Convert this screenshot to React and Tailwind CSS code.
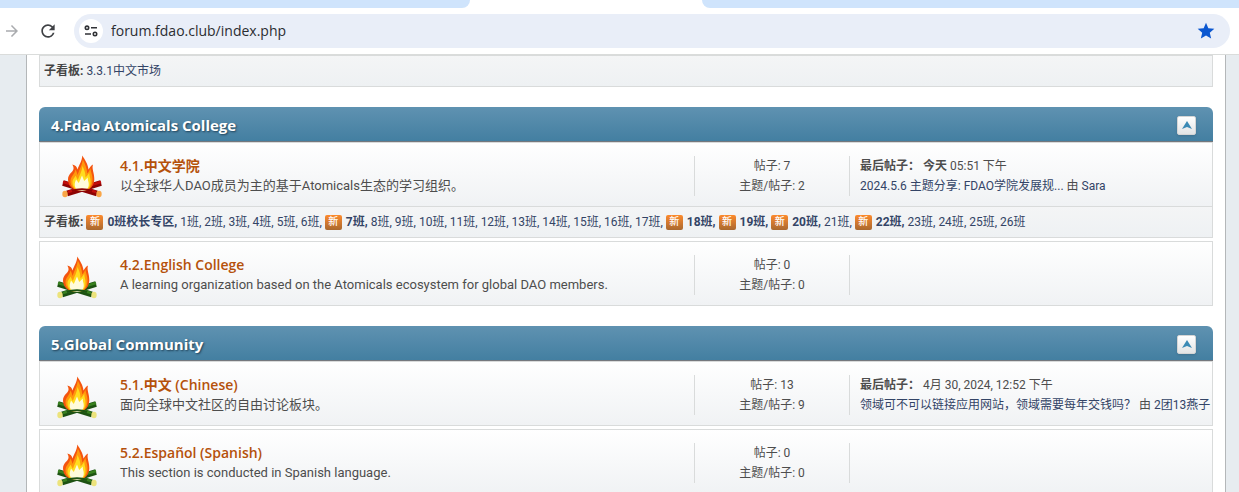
import React, { useState } from 'react'
import { MdArrowForward, MdRefresh, MdStar } from 'react-icons/md'

const categories = [
  {
    title: '4.Fdao Atomicals College',
    boards: [
      {
        name: '4.1.中文学院',
        description: '以全球华人DAO成员为主的基于Atomicals生态的学习组织。',
        posts: 7,
        topics: 2,
        unread: true,
        last: {
          day: '今天',
          time: '05:51 下午',
          topic: '2024.5.6 主题分享: FDAO学院发展规...',
          author: 'Sara',
        },
        children: [
          { name: '0班校长专区', unread: true },
          { name: '1班' },
          { name: '2班' },
          { name: '3班' },
          { name: '4班' },
          { name: '5班' },
          { name: '6班' },
          { name: '7班', unread: true },
          { name: '8班' },
          { name: '9班' },
          { name: '10班' },
          { name: '11班' },
          { name: '12班' },
          { name: '13班' },
          { name: '14班' },
          { name: '15班' },
          { name: '16班' },
          { name: '17班' },
          { name: '18班', unread: true },
          { name: '19班', unread: true },
          { name: '20班', unread: true },
          { name: '21班' },
          { name: '22班', unread: true },
          { name: '23班' },
          { name: '24班' },
          { name: '25班' },
          { name: '26班' },
        ],
      },
      {
        name: '4.2.English College',
        description:
          'A learning organization based on the Atomicals ecosystem for global DAO members.',
        posts: 0,
        topics: 0,
      },
    ],
  },
  {
    title: '5.Global Community',
    boards: [
      {
        name: '5.1.中文 (Chinese)',
        description: '面向全球中文社区的自由讨论板块。',
        posts: 13,
        topics: 9,
        last: {
          time: '4月 30, 2024, 12:52 下午',
          topic: '领域可不可以链接应用网站，领域需要每年交钱吗？',
          author: '2团13燕子',
        },
      },
      {
        name: '5.2.Español (Spanish)',
        description: 'This section is conducted in Spanish language.',
        posts: 0,
        topics: 0,
      },
    ],
  },
]

const Campfire = ({ unread }) => {
  const log = unread ? '#c20d0d' : '#38801f'
  const shade = unread ? '#8d0404' : '#1d5212'
  const end = unread ? '#f9a648' : '#ece37c'
  return (
    <svg
      viewBox="0 0 54 54"
      className="block h-[54px] w-[54px]"
      aria-hidden="true"
    >
      <g transform={unread ? 'translate(9 7)' : 'translate(4 9)'}>
        <path d="M1 28 35 38.5" stroke={shade} strokeWidth="5.5" />
        <path d="M39 28 5 38.5" stroke={shade} strokeWidth="5.5" />
        <path d="M1 27 34 37" stroke={log} strokeWidth="2.500" />
        <path d="M39 27 6 37" stroke={log} strokeWidth="2.500" />
        <path
          d="M20 36C11 36 6 31 6 24.500 6 19 11 17 11.500 14 11.800 12 11 11 10.300 9.500 13.500 10 15 12 15.500 14.500 17 10 20 6 20.300.500 23 5 26 9 26.500 14.500 28 12.500 28.500 10.500 31 9.500 29.500 14 32.500 18 32.300 24.500 32 31 28 36 20 36Z"
          fill="#f4540f"
        />
        <path
          d="M20 36C12.500 36 8 31 8.500 25.500 9 21 13 19 13.300 14.500 14.500 16 15 18 15.500 20 17.500 14 20.500 9 20.800 4.500 23 9 25 13 25.200 18.500 26.800 17 28 14.500 28.500 13 28.500 17 31 20 30.500 25.500 30 31.500 27 36 20 36Z"
          fill="#ff980c"
        />
        <path
          d="M20 36C14 36 10.500 32 10.500 27.500 10.500 24 12.500 23 13.500 20.500L15.800 25C17.500 20 20 16.500 20.500 11 22.500 15 23.500 18.500 23.500 22.500 25.200 21 26.500 19 27.300 17.500 27.300 21.500 29 23.500 28.500 28 28 32.500 25.500 36 20 36Z"
          fill="#ffdc1e"
        />
        <path
          d="M20 36C15.500 36 12.700 33 12.700 30 12.700 27.500 13.500 26.500 14 24.500L16.800 28 20 20.500 22.200 26 25.800 22.500C25.500 26 27.200 27 26.700 30.500 26.200 34 24 36 20 36Z"
          fill="#fffcdb"
        />
        <path
          d="M10 36C15 33.500 25 33.500 30 36"
          stroke={shade}
          strokeWidth="2"
          fill="none"
        />
        <ellipse cx="3" cy="39" rx="2.700" ry="3.200" fill={end} />
        <ellipse cx="37" cy="39" rx="2.700" ry="3.200" fill={end} />
      </g>
    </svg>
  )
}

const SiteSettingsIcon = () => (
  <svg
    viewBox="0 0 14 12"
    className="h-3 w-3.5"
    fill="none"
    stroke="#303236"
    strokeWidth="1.600"
    aria-hidden="true"
  >
    <circle cx="3" cy="2.800" r="1.700" />
    <path d="M7 2.800h6M1 9h6" />
    <circle cx="11" cy="9" r="1.700" />
  </svg>
)

const BrowserBar = () => (
  <header className="border-b border-[#dadcdb] bg-white">
    <div className="flex h-2 bg-white">
      <div className="w-[470px] rounded-br-xl bg-[#cfe4fc]" />
      <div className="w-[232px]" />
      <div className="flex-1 rounded-bl-xl bg-[#cfe4fc]" />
    </div>
    <div className="flex h-[46px] items-center pr-[9px] pl-[3px]">
      <button type="button" aria-label="Forward" className="text-[#a9abae]">
        <MdArrowForward className="h-[18px] w-[18px]" />
      </button>
      <button type="button" aria-label="Reload" className="ml-[17px] text-[#3f4145]">
        <MdRefresh className="h-5 w-5" />
      </button>
      <div className="ml-4 flex h-[34px] flex-1 items-center rounded-full bg-[#e9eef8] pr-3.5 pl-[5px]">
        <button
          type="button"
          aria-label="Site information"
          className="flex h-6 w-6 items-center justify-center rounded-full bg-white"
        >
          <SiteSettingsIcon />
        </button>
        <input
          type="text"
          aria-label="Address"
          defaultValue="forum.fdao.club/index.php"
          className="ml-2 flex-1 bg-transparent font-['Open_Sans','Noto_Sans_CJK_SC',sans-serif] text-sm text-[#2b2d31] outline-none"
        />
        <button type="button" aria-label="Bookmark" className="text-[#0b57d0]">
          <MdStar className="h-5 w-5" />
        </button>
      </div>
    </div>
  </header>
)

const ChildBoards = ({ items }) => (
  <p className="truncate text-xs leading-[30px] text-[#334466]">
    <strong className="text-[#444]">子看板:</strong>{' '}
    {items.map((c, i) => (
      <React.Fragment key={c.name}>
        {c.unread && (
          <a
            href="#new"
            className="mr-1 inline-block h-[15px] w-[17px] rounded-xs bg-linear-to-b from-[#fd8a2c] to-[#a9682f] text-center align-middle text-[10px] leading-[14px] font-medium text-white"
          >
            新
          </a>
        )}
        <a href="#board" className={c.unread ? 'font-bold' : ''}>
          {c.name}
          {i < items.length - 1 && ','}
        </a>{' '}
      </React.Fragment>
    ))}
  </p>
)

const BoardRows = ({ board }) => {
  const { last, children } = board
  const edge = children ? 'border-t' : 'border-y'
  return (
    <tbody>
      <tr
        className={`bg-linear-to-b from-white to-[#f0f2f4] ${children ? 'h-16' : 'h-[65px]'}`}
      >
        <td className={`border-l border-[#d9dbdb] p-0 ${edge}`}>
          <div className="flex justify-center">
            <Campfire unread={board.unread} />
          </div>
        </td>
        <td className={`border-[#d9dbdb] px-px pt-0.5 pb-0 leading-5 ${edge}`}>
          <a
            href="#board"
            className="block font-['Open_Sans','Noto_Sans_CJK_SC',sans-serif] text-sm leading-5 font-semibold text-[#b5510b]"
          >
            {board.name}
          </a>
          <p className="text-[13px] leading-5">{board.description}</p>
        </td>
        <td className={`border-[#d9dbdb] px-0 pt-0.5 pb-0 text-center ${edge}`}>
          <p className="border-l border-[#d9dbdb] text-xs leading-5">
            帖子: {board.posts}
            <br />
            主题/帖子: {board.topics}
          </p>
        </td>
        <td className={`border-r border-[#d9dbdb] px-0 pt-0.5 pb-0 ${edge}`}>
          <div className="h-10 truncate border-l border-[#d9dbdb] pl-2.5 text-xs leading-5">
            {last && (
              <>
                <p>
                  <strong>最后帖子：</strong> {last.day && <strong>{last.day}</strong>}{' '}
                  {last.time}
                </p>
                <p>
                  <a href="#topic" className="text-[#334466]">
                    {last.topic}
                  </a>{' '}
                  由{' '}
                  <a href="#user" className="text-[#334466]">
                    {last.author}
                  </a>
                </p>
              </>
            )}
          </div>
        </td>
      </tr>
      {children && (
        <tr className="bg-linear-to-b from-[#f4f5f6] to-[#eef1f3]">
          <td colSpan={4} className="border border-[#d9dbdb] px-1 py-0">
            <ChildBoards items={children} />
          </td>
        </tr>
      )}
    </tbody>
  )
}

const Category = ({ category }) => {
  const [open, setOpen] = useState(true)
  return (
    <section className="mt-5">
      <div className="flex h-[35px] items-center justify-between rounded-t-md border-b border-[#75787d] bg-linear-to-b from-[#5f92b1] to-[#437fa1] pt-0.5 pr-[17px] pl-3">
        <h2 className="font-['Open_Sans','Noto_Sans_CJK_SC',sans-serif] text-[15px] leading-5 font-bold text-white text-shadow-[1px_1px_2px_#1f3f55]">
          {category.title}
        </h2>
        <button
          type="button"
          aria-label="Toggle category"
          onClick={() => setOpen(!open)}
          className="flex h-[19px] w-[19px] items-center justify-center rounded-xs border border-[#d5d5d5] bg-linear-to-b from-white to-[#e2e4e5] shadow-sm"
        >
          <svg viewBox="0 0 10 8" className="h-2 w-2.5" aria-hidden="true">
            <path d="M5 0 10 8 5 6 0 8Z" fill="#3b8ab5" />
          </svg>
        </button>
      </div>
      {open && (
        <table className="w-full table-fixed border-separate border-spacing-0">
          <colgroup>
            <col className="w-20" />
            <col />
            <col className="w-[155px]" />
            <col className="w-[364px]" />
          </colgroup>
          {category.boards.map((board, i) => (
            <React.Fragment key={board.name}>
              {i > 0 && (
                <tbody aria-hidden="true">
                  <tr>
                    <td colSpan={4} className="h-[3px] p-0" />
                  </tr>
                </tbody>
              )}
              <BoardRows board={board} />
            </React.Fragment>
          ))}
        </table>
      )}
    </section>
  )
}

const App = () => (
  <div className="h-screen overflow-hidden bg-[#e7ecf0] font-[Roboto,'Noto_Sans_CJK_SC',sans-serif] text-[#4d4d4d]">
    <BrowserBar />
    <main className="mr-[13px] ml-[26px] border-x border-[#b4b7b9] bg-white px-3 pb-5">
      <div className="border border-[#d9dbdb] bg-linear-to-b from-[#f4f5f6] to-[#eef1f3] px-1">
        <ChildBoards items={[{ name: '3.3.1中文市场' }]} />
      </div>
      {categories.map((category) => (
        <Category key={category.title} category={category} />
      ))}
    </main>
  </div>
)

export default App
